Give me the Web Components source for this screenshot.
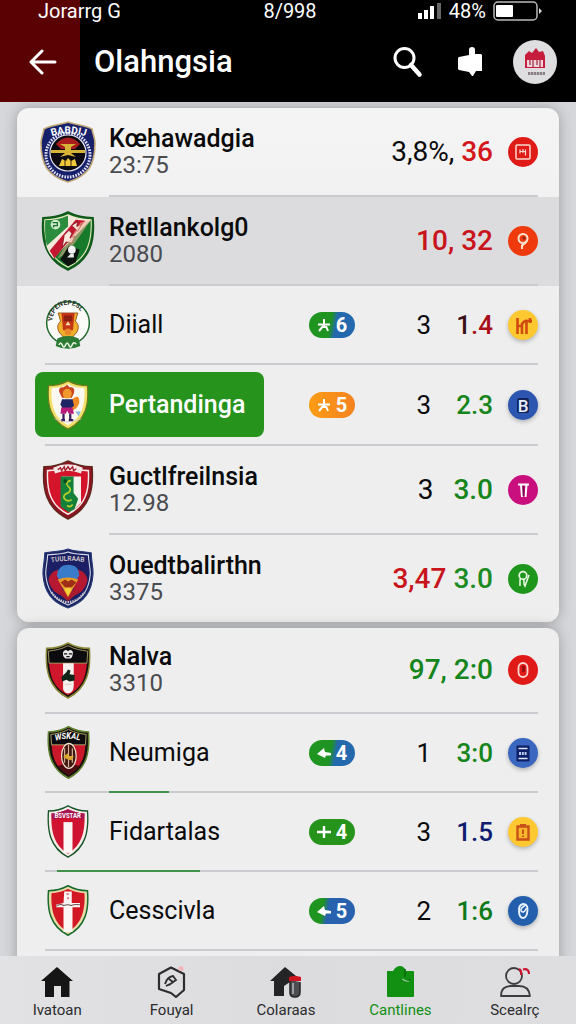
<!DOCTYPE html>
<html lang="id">
<head>
<meta charset="utf-8">
<meta name="viewport" content="width=device-width, initial-scale=1">
<title>Olahngsia</title>
<style>
  body {
    margin: 0;
    font-family: Roboto, "Liberation Sans", sans-serif;
    color: #0b0b0c;
  }
</style>
</head>
<body>
<score-app>
  <status-bar slot="header" carrier="Jorarrg G" time="8/998" charge="48%"></status-bar>
  <title-bar slot="header">Olahngsia</title-bar>

  <score-card>
    <team-row tall rule="short" crest="police" name="Kœhawadgia" sub="23:75">
      <span slot="value"><span style="font-weight:400">3,8%,</span> <span style="color:#d3171b">36</span></span>
      <round-badge slot="badge" icon="frame" color="#e01a17"></round-badge>
    </team-row>
    <team-row tall shaded rule="short" crest="sash" name="Retllankolg0" sub="2080">
      <span slot="value" style="color:#c8151b">10, 32</span>
      <round-badge slot="badge" icon="pin" color="#ee3a0c"></round-badge>
    </team-row>
    <team-row crest="round" name="Diiall">
      <count-pill slot="pill" kind="split" mark="star">6</count-pill>
      <span slot="count">3</span>
      <span slot="value"><span style="color:#3a1114">1</span><span style="color:#a80f18">.4</span></span>
      <round-badge slot="badge" icon="bars" color="#fdc830" raised></round-badge>
    </team-row>
    <team-row active crest="player" name="Pertandinga">
      <count-pill slot="pill" kind="orange" mark="star">5</count-pill>
      <span slot="count">3</span>
      <span slot="value" style="color:#15851c">2.3</span>
      <round-badge slot="badge" icon="b" color="#2c56b0" raised></round-badge>
    </team-row>
    <team-row tall rule="short" crest="snake" name="Guctlfreilnsia" sub="12.98">
      <span slot="count">3</span>
      <span slot="value" style="color:#15851c">3.0</span>
      <round-badge slot="badge" icon="t" color="#c90f7d"></round-badge>
    </team-row>
    <team-row tall rule="none" crest="balloon" name="Ouedtbalirthn" sub="3375">
      <span slot="value"><span style="color:#c8151b">3,47</span> <span style="color:#1d8b24">3.0</span></span>
      <round-badge slot="badge" icon="key" color="#1e961b"></round-badge>
    </team-row>
  </score-card>

  <score-card class="lower">
    <team-row tall crest="tower" name="Nalva" sub="3310">
      <span slot="value" style="color:#15851c">97, 2:0</span>
      <round-badge slot="badge" icon="ring" color="#e01a17"></round-badge>
    </team-row>
    <team-row crest="oval" name="Neumiga" mark-from="64" mark-size="60">
      <count-pill slot="pill" kind="split" mark="arrow">4</count-pill>
      <span slot="count">1</span>
      <span slot="value" style="color:#15851c">3:0</span>
      <round-badge slot="badge" icon="page" color="#3a67bf" raised></round-badge>
    </team-row>
    <team-row crest="stripe" name="Fidartalas" mark-from="12" mark-size="143">
      <count-pill slot="pill" kind="green" mark="plus">4</count-pill>
      <span slot="count">3</span>
      <span slot="value" style="color:#101c70">1.5</span>
      <round-badge slot="badge" icon="clip" color="#fdc830" raised></round-badge>
    </team-row>
    <team-row crest="cross" name="Cesscivla">
      <count-pill slot="pill" kind="blue" mark="arrow">5</count-pill>
      <span slot="count">2</span>
      <span slot="value" style="color:#0f7a17">1:6</span>
      <round-badge slot="badge" icon="loop" color="#245fae" raised></round-badge>
    </team-row>
  </score-card>

  <tab-item slot="tabs" icon="home">Ivatoan</tab-item>
  <tab-item slot="tabs" icon="hex">Fouyal</tab-item>
  <tab-item slot="tabs" icon="house">Colaraas</tab-item>
  <tab-item slot="tabs" icon="bag" current>Cantlines</tab-item>
  <tab-item slot="tabs" icon="person">Scealrç</tab-item>
</score-app>

<script>
const SHIELD = 'M28 1 C36 5 45 7 54 7 C56 30 52 50 28 61 C4 50 0 30 2 7 C11 7 20 5 28 1Z';

// every crest is drawn on a 56x62 canvas; w and h are the size on the page
const CRESTS = {
  police: { w: 56, h: 62, art: `
    <path d="M28 1 C36 4 45 4 52 8 C53 14 55 17 55 22 C55 44 48 55 28 61 C8 55 1 44 1 22 C1 17 3 14 4 8 C11 4 20 4 28 1Z" fill="#17206b" stroke="#c2a878" stroke-width="1.6"/>
    <circle cx="28" cy="34" r="22" fill="none" stroke="#dfe0f5" stroke-width="3" stroke-dasharray="1.6 1.2"/>
    <circle cx="28" cy="32" r="18" fill="#0c0b12" stroke="#e7e3ef" stroke-width="1.2"/>
    <path d="M16 23 Q28 10 40 23 L35 28 H21Z" fill="#a81d1d"/>
    <path d="M11 29 H25 V26 L20 23 H36 L31 26 V29 H45 V32 H31 L36 36 L28 34 L20 36 L25 32 H11Z" fill="#d8b436"/>
    <path d="M19 45 L22 38 L26 40 L28 37 L31 40 L35 38 L37 45Z" fill="#f0c83a"/>
    <path d="M25 39 V45 M31 39 V45" stroke="#402a08" stroke-width="1"/>
    <path id="arc1" d="M7 17 Q28 8 50 17" fill="none"/>
    <text font-size="10" font-weight="700" fill="#fff"><textPath href="#arc1" startOffset="5">BABDIJ</textPath></text>` },
  sash: { w: 54, h: 60, art: `
    <path d="${SHIELD}" fill="#12631f" stroke="#12591c" stroke-width="1.6"/>
    <path d="M28 4 C36 8 44 9 52 9 C53 30 49 48 28 58 C7 48 3 30 4 9 C12 9 20 8 28 4Z" fill="#167a2a" stroke="#dfe7b8" stroke-width="1.2"/>
    <path d="M28 4 L38 8 L52 9 L13 49 C7 42 5 36 5 32Z" fill="#f2e8dc"/>
    <path d="M36 9 L46 10 L14 49 L9 41Z" fill="#c3182f"/>
    <path d="M5 10 C15 10 22 8 28 5 L28 16 L6 36 C4 26 4 18 5 10Z" fill="#2b8c3d"/>
    <path d="M24 25 l5 -5 3 3 -2 5 5 -2 -3 7 -6 -1 -4 6z M32 15 l6 -4 -1 5 5 -2 -4 7z" fill="#fbe9df" stroke="#7c0f1c" stroke-width=".8"/>
    <path d="M52 9 L41 12 L17 49 L28 43 L38 29Z" fill="#f0b295" opacity=".55"/>
    <path d="M20 50 L29 36 L40 40 L36 53 L28 57Z" fill="#0d1410"/>
    <circle cx="32" cy="40" r="4" fill="#f2f2f2"/><path d="M31 44 l-4 4 7 0 0 -4z" fill="#e9ede9"/>
    <circle cx="15" cy="14" r="5" fill="#cfeacf"/><path d="M12 12 h5 v3 h-4 v2" fill="none" stroke="#17702a" stroke-width="1.3"/>` },
  round: { w: 46, h: 51, art: `
    <circle cx="28" cy="29" r="26" fill="#fbfbf7" stroke="#1d6a2b" stroke-width="1.8"/>
    <path id="arc3" d="M9 27 A19 20 0 0 1 47 27" fill="none"/>
    <text font-size="8" font-weight="700" fill="#2a2f2a"><textPath href="#arc3">VEPENEPESL</textPath></text>
    <path d="M16 17 H40 L37 27 Q43 32 39 40 L34 46 H22 L17 40 Q13 32 19 27Z" fill="#f0b02c" stroke="#8c4b12" stroke-width="1"/>
    <path d="M20 17 H36 L34 38 H22Z" fill="#c23616"/><path d="M23 20 H33 V27 H23Z" fill="#8e1f10"/>
    <path d="M28 27 l3 5 h-6z" fill="#f8dfae"/><circle cx="28" cy="40" r="4" fill="#e8862a"/>
    <path d="M13 57 L15 48 Q28 42 41 48 L43 57 Q28 64 13 57Z" fill="#2b7a33"/>
    <path d="M17 56 q2 -5 4 0 t4 0 t4 0 t4 0 t5 -1" fill="none" stroke="#e8f3df" stroke-width="2"/>` },
  player: { w: 42, h: 50, art: `
    <path d="${SHIELD}" fill="#f1e069" stroke="#6b7a1c" stroke-width="1.6"/>
    <path d="M28 5 C35 9 43 10 50 10 C51 30 47 47 28 56 C9 47 5 30 6 10 C13 10 21 9 28 5Z" fill="#fbf8f2"/>
    <path d="M16 14 Q16 8 22 9 L27 6 L30 9 Q38 8 36 16 L33 22 H20Z" fill="#c8451d"/>
    <circle cx="27" cy="17" r="6" fill="#f0982d"/>
    <path d="M33 24 Q44 16 43 28 Q41 36 33 38Z" fill="#f08a26"/>
    <path d="M20 24 H34 L36 32 L31 36 H21 L18 30Z" fill="#1f2564"/>
    <path d="M19 34 H34 L36 42 H29 L27 38 L25 42 H18Z" fill="#b81b78"/>
    <path d="M22 42 V50 M31 42 V50 M19 50 H24 M29 50 H35" stroke="#3a1b60" stroke-width="3"/>
    <path d="M38 39 l7 0 -3 6z" fill="#86b6d8"/><path d="M10 48 Q28 56 46 48" fill="none" stroke="#c9c9c9"/>` },
  snake: { w: 52, h: 60, art: `
    <path d="${SHIELD}" fill="#8b1420" stroke="#5c2a1f" stroke-width="1.4"/>
    <path d="M28 6 C36 10 43 11 50 11 C51 32 47 47 28 56 C9 47 5 32 6 11 C13 11 20 10 28 6Z" fill="#d3142b" stroke="#f4e9e6" stroke-width="1.6"/>
    <path d="M12 8 Q28 1 44 8 L42 14 Q28 8 14 14Z" fill="#f3e6e4"/>
    <path d="M17 10 l3 -2 1 3 3 -4 1 4 3 -4 2 3 3 -3 1 4 3 -2" fill="none" stroke="#a41826" stroke-width="1.4"/>
    <path d="M21 17 H42 V44 L32 54 L21 48Z" fill="#f5f1ee"/>
    <path d="M20 17 H34 V34 L39 40 L35 51 L29 54 L20 48Z" fill="#15803a"/>
    <path d="M31 21 q-7 2 -3 6 q5 4 0 7 q-6 2 -4 6 q4 4 8 1 M27 47 q3 3 6 -1" fill="none" stroke="#b8cf2c" stroke-width="1.800"/>
    <circle cx="25" cy="22" r="2" fill="#0b4b20"/>` },
  balloon: { w: 52, h: 61, art: `
    <path d="M28 1 C36 4 45 3 53 5 C53 12 55 18 55 26 C54 44 46 55 28 61 C10 55 2 44 1 26 C1 18 3 12 3 5 C11 3 20 4 28 1Z" fill="#1a2460" stroke="#2b3b7b" stroke-width="1.2"/>
    <path d="M28 4 C36 7 44 6 50 7 C50 14 52 19 52 26 C51 42 44 52 28 58 C12 52 5 42 4 26 C4 19 6 14 6 7 C12 6 20 7 28 4Z" fill="#1c1f63" stroke="#d5d8ea" stroke-width="1.2"/>
    <path d="M7 33 Q8 24 17 22 L24 49 Q10 46 7 33Z M49 33 Q48 24 39 22 L32 49 Q46 46 49 33Z" fill="#b61831"/>
    <path d="M14 43 H42 L28 54Z" fill="#a81c2e"/>
    <path d="M16 28 Q17 17 28 17 Q40 17 40 28 L28 49Z" fill="#3a7cc9"/>
    <path d="M17 32 Q28 28 39 32 L28 50Z" fill="#e89a28"/>
    <path d="M20 35 l5 -3 3 2 4 -2 5 3 -5 5 h-7z" fill="#9c2f16"/><path d="M24 41 h8 l-4 8z" fill="#f5d23b"/>
    <path id="arc6" d="M9 15 Q28 11 49 15" fill="none"/>
    <text font-size="7" font-weight="700" fill="#c9c2c6"><textPath href="#arc6" startOffset="1">TUULRAAB</textPath></text>
    <path d="M10 45 Q18 55 28 55 Q38 55 46 45" fill="none" stroke="#c8c4c9" stroke-width="2.4" stroke-dasharray="1.6 1"/>` },
  tower: { w: 46, h: 57, art: `
    <path d="${SHIELD}" fill="#14110f" stroke="#8c8a3a" stroke-width="1.8"/>
    <path d="M5 22 H51 C50 40 44 50 28 58 C12 50 6 40 5 22Z" fill="#d0162a"/>
    <path d="M28 4 C36 8 44 9 52 10 L51 23 H5 L4 10 C12 9 20 8 28 4Z" fill="#0c0c0e" stroke="#d2c47c" stroke-width=".8"/>
    <path d="M22 23 H35 V47 Q35 55 28 56 Q21 55 22 47Z" fill="#f6f1ee"/>
    <path d="M22 11 q3 -4 6 -1 q4 -3 6 1 q0 6 -3 7 h-6 q-4 -2 -3 -7z" fill="#e8e8e8"/><path d="M23 13 h4 m2 0 h4 m-7 3 h4" stroke="#111" stroke-width="1.4"/>
    <path d="M20 38 l6 -5 2 -3 3 1 -1 4 6 1 0 6 -6 1 -4 -2 -5 2z" fill="#10251a"/>
    <path d="M24 46 h8" stroke="#e5bcb8" stroke-width="1"/>` },
  oval: { w: 43, h: 53, art: `
    <path d="${SHIELD}" fill="#15120f" stroke="#5f7f2f" stroke-width="2"/>
    <path d="M6 22 H50 C49 40 43 49 28 57 C13 49 7 40 6 22Z" fill="#c8182a"/>
    <path d="M13 47 Q28 42 43 47 L28 58Z" fill="#4c0d12"/>
    <path d="M28 4 C36 8 44 9 51 10 L50 22 H6 L5 10 C12 9 20 8 28 4Z" fill="#0c0c0e" stroke="#d8cc80" stroke-width=".9"/>
    <path id="arc8" d="M9 18 Q28 12 48 18" fill="none"/>
    <text font-size="10" font-weight="700" font-style="italic" fill="#fff"><textPath href="#arc8" startOffset="2">WSKAL</textPath></text>
    <ellipse cx="28.5" cy="35" rx="9.5" ry="14.5" fill="#3f1710" stroke="#eddccb" stroke-width="1.6"/>
    <path d="M28 22 V48 M23 26 V43 M33 26 V43" stroke="#d8b59a" stroke-width="1.5"/>
    <path d="M21 36 l6 -4 2 3 6 0 -3 5 -6 -1z" fill="#dba62e"/>` },
  stripe: { w: 42, h: 53, art: `
    <path d="${SHIELD}" fill="#f5ebe8" stroke="#175427" stroke-width="1.8"/>
    <path d="M28 5 C36 8 43 10 50 10 C51 30 47 47 28 57 C9 47 5 30 6 10 C13 10 20 8 28 5Z" fill="#cf1330"/>
    <path d="M28 5 C36 8 43 10 50 10 L49 17 Q28 13 7 17 L6 10 C13 10 20 8 28 5Z" fill="#a51552"/>
    <rect x="22" y="20" width="12" height="36" fill="#fbf6f6"/>
    <text x="10" y="15" font-size="8" font-weight="700" fill="#fff">BSVSTAR</text>` },
  cross: { w: 42, h: 51, art: `
    <path d="${SHIELD}" fill="#e7d9a8" stroke="#176a2c" stroke-width="2"/>
    <path d="M28 5 C36 8 43 10 50 10 C51 30 47 47 28 57 C9 47 5 30 6 10 C13 10 20 8 28 5Z" fill="#d21823"/>
    <path d="M23 8 H33 V22 H44 V27 H34 V57 H22 V27 H12 V24 L22 22Z" fill="#fbf6f4"/>
    <path d="M12 26 q6 -4 10 -1 q6 -2 10 0 q5 -2 12 -1" fill="none" stroke="#6a5450" stroke-width="1.4"/>
    <path d="M26 11 h3 m-2 5 h2" stroke="#c21a26" stroke-width="1.4"/>` },
};

const BADGE_ICONS = {
  frame: `<rect x="8" y="8" width="14" height="14" rx="1" fill="none" stroke="#fbd9d0" stroke-width="1.5"/>
    <path d="M12 12.5 v4 M12 14.5 h6 M15 12 v4 M17.5 12.5 v6" stroke="#fbd9d0" stroke-width="1.2"/>`,
  pin: `<circle cx="15" cy="12.5" r="4.5" fill="none" stroke="#fde3cf" stroke-width="2"/><circle cx="16" cy="12" r="1.5" fill="#8c2410"/>
    <path d="M18.5 15 Q17 18 14 19.5 V23" fill="none" stroke="#fde3cf" stroke-width="2"/>`,
  bars: `<path d="M9.5 8 V24 M14 13 V24 M18.5 10 V24 M9.5 16 H14 M14 14 Q17 10 19 11 M19 11 H24 M22 8 V13" fill="none" stroke="#d14a10" stroke-width="2.6"/>`,
  b: `<rect x="9" y="8" width="12" height="15" rx="2" fill="#12235c"/><text x="15" y="21.5" text-anchor="middle" font-size="17" font-weight="500" fill="#e9effb">B</text>`,
  t: `<path d="M10 9.5 H21 M13 10 L14 22 M18.5 10 L17.5 22" fill="none" stroke="#fff" stroke-width="2"/><path d="M15.5 11 V21" stroke="#6e0c50" stroke-width="1.6"/>`,
  key: `<circle cx="15" cy="11.5" r="3.8" fill="none" stroke="#e5f7dd" stroke-width="1.8"/>
    <path d="M12 15 V22 M16 15 V20 L17 22 L21 11" fill="none" stroke="#e5f7dd" stroke-width="1.6"/>`,
  ring: `<rect x="10.5" y="8" width="9" height="14" rx="4.5" fill="none" stroke="#ffd9d2" stroke-width="1.8"/><path d="M15.5 11 V17" stroke="#8a0f0f" stroke-width="2.5"/>`,
  page: `<rect x="8.5" y="7.5" width="13" height="16" rx="1" fill="#0d1f66"/><path d="M10.5 10.5 H19.5 M10.5 20.5 H19.5" stroke="#dbe6fb" stroke-width="1.5"/>
    <path d="M11 15.5 H19" stroke="#b6c8f0" stroke-width="3" stroke-dasharray="2 .8"/>`,
  clip: `<path d="M9.5 9.5 H20.5 V22.5 H9.5Z" fill="#f8b62a" stroke="#c8501a" stroke-width="2.4"/><path d="M12 7 H18 V10 H12Z" fill="#c8501a"/>
    <path d="M15 12.5 V17 M15 18.5 V20" stroke="#c8501a" stroke-width="2"/>`,
  loop: `<path d="M15 8 Q20 8 19.5 14 Q19 21.5 15.5 22 Q11 22 11 15 Q10.5 9 15 8Z" fill="none" stroke="#e9f3fd" stroke-width="1.9"/>
    <path d="M18 9 Q12 12 13 15 Q16 18 18.5 12" fill="none" stroke="#e9f3fd" stroke-width="1.5"/>`,
};

const PILL_MARKS = {
  star: `<path d="M1 6.5 H13 M7 1 V8 M7 7 L2 13 M5 9 H10 M9 8 L11 13" fill="none" stroke="currentColor" stroke-width="2"/>`,
  plus: `<path d="M7 1 V13 M0 7 H14" stroke="currentColor" stroke-width="2.4"/>`,
  arrow: `<path d="M0 8 L7 2 L8 6 L14 7 V9.5 L9 9.5 L8 12Z" fill="currentColor"/>`,
};

const TAB_ICONS = {
  home: `<path d="M16 1 L32 15 H28.5 V31 H20 V20 H13 V31 H4 V15 H0Z" fill="#151515"/>`,
  hex: `<path d="M15 1.5 L28 8 V24 L20 31 L15 27 L3 23 V8Z" fill="none" stroke="#2d2d2f" stroke-width="2.2" stroke-linejoin="round"/>
    <path d="M9 18 Q11 11 17 10 L20 14 L13 19 M13 13 L17 16 M10 20 L14 18" fill="none" stroke="#2d2d2f" stroke-width="1.8"/>
    <circle cx="25" cy="2.5" r="2.5" fill="#f3b6bb"/>`,
  house: `<path d="M15 1 L31 14 H26 V16 H20 L14 20 V30 H4 V15 H0Z" fill="#242426"/>
    <path d="M20 14 V27 Q20 31 25 31 Q30 31 30 26 V16" fill="#4c4d50" stroke="#242426" stroke-width="1.5"/>
    <path d="M19 11 Q25 9 31 11 V15 H19Z" fill="#cf1520"/><path d="M23 17 V28" stroke="#b7b8bb" stroke-width="1.5"/>`,
  bag: `<path d="M3 5 H9 Q12 0 16 0 Q20 0 22 5 H29 Q30 5 30 6 V30 Q30 31 29 31 H4 Q3 31 3 30Z" fill="#119012"/>
    <path d="M21 3 V11 M17 13 Q22 17 26 13" fill="none" stroke="#0a6a0c" stroke-width="1.5"/><path d="M18 13 q4 3 7 2" fill="none" stroke="#9bd59b" stroke-width="1.2"/>`,
  person: `<circle cx="15" cy="10" r="8" fill="none" stroke="#3d3d40" stroke-width="1.8"/>
    <path d="M2 30 Q2 20 12 20 H20 Q30 20 31 30Z" fill="none" stroke="#3d3d40" stroke-width="1.8" stroke-linejoin="round"/>
    <path d="M20 3 Q23 5 22 9 M24 3.500 Q30 2 30 8" fill="none" stroke="#c9152f" stroke-width="2.2"/>`,
};

class ScoreApp extends HTMLElement {
  constructor() {
    super();
    this.attachShadow({mode: 'open'});
    this.shadowRoot.innerHTML = `
      <style>
        :host {
          display: flex;
          flex-direction: column;
          height: 100vh;
          background: #d6d7da;
        }
        header {
          flex: none;
          color: #fff;
          background: linear-gradient(90deg, #5a0104 80px, #000 80px);
        }
        main {
          flex: 1;
          min-height: 0;
          overflow-y: auto;
          scrollbar-width: none;
          display: flex;
          flex-direction: column;
          gap: 6px;
          padding: 6px 17px 0;
        }
        nav {
          flex: none;
          display: flex;
          padding: 10px 4px 4px 0;
          background: linear-gradient(90deg, #e2e2e4, #dcdcdf 50%, #dedee1);
        }
        ::slotted(tab-item) {
          flex: 1;
        }
      </style>
      <header><slot name="header"></slot></header>
      <main><slot></slot></main>
      <nav><slot name="tabs"></slot></nav>
    `;
  }
}

class StatusBar extends HTMLElement {
  constructor() {
    super();
    this.attachShadow({mode: 'open'});
  }

  connectedCallback() {
    this.shadowRoot.innerHTML = `
      <style>
        :host {
          display: grid;
          grid-template-columns: 1fr auto 1fr;
          align-items: center;
          height: 22px;
          padding: 0 34px 0 38px;
          font-size: 20px;
          line-height: 22px;
        }
        .right {
          display: flex;
          justify-content: flex-end;
          align-items: center;
          gap: 7px;
        }
        svg { display: block; }
      </style>
      <span>${this.getAttribute('carrier')}</span>
      <span>${this.getAttribute('time')}</span>
      <span class="right">
        <svg width="25" height="18" viewBox="0 0 25 18" aria-hidden="true">
          <path d="M1 11 h4 v6 h-4z M7 8 h4 v9 h-4z M13 4 h4 v13 h-4z" fill="#fff"/>
          <path d="M20 1 h4 v16 h-4z" fill="#666"/>
        </svg>
        <span>${this.getAttribute('charge')}</span>
        <svg width="49" height="20" viewBox="0 0 49 20" aria-hidden="true">
          <rect x="1" y="1" width="43" height="18" rx="4" fill="none" stroke="#bbb" stroke-width="1.5"/>
          <rect x="3" y="4" width="17" height="12" rx="1" fill="#fff"/>
          <path d="M46 7 L49 10 L46 13Z" fill="#ddd"/>
        </svg>
      </span>
    `;
  }
}

class TitleBar extends HTMLElement {
  constructor() {
    super();
    this.attachShadow({mode: 'open'});
    this.shadowRoot.innerHTML = `
      <style>
        :host {
          display: flex;
          align-items: center;
          height: 80px;
          padding-right: 19px;
        }
        h1 {
          flex: 1;
          margin: 0 0 0 14px;
          font-size: 31px;
          line-height: 40px;
          font-weight: 500;
        }
        button {
          display: flex;
          align-items: center;
          justify-content: center;
          padding: 0;
          border: none;
          background: transparent;
          color: inherit;
          cursor: pointer;
        }
        .back { width: 80px; height: 80px; padding-left: 6px; }
        .tool { width: 62px; height: 48px; }
        .me { width: 44px; height: 44px; margin-left: 12px; border-radius: 50%; background: #dedee0; }
      </style>
      <button class="back" aria-label="Back">
        <svg width="28" height="26" viewBox="0 0 28 26" fill="none" stroke="#fff" stroke-width="3" stroke-linecap="round" stroke-linejoin="round">
          <path d="M13 2 L2 13 L13 24 M2 13 H26"/>
        </svg>
      </button>
      <h1><slot></slot></h1>
      <button class="tool" aria-label="Search">
        <svg width="30" height="32" viewBox="0 0 30 32" fill="none" stroke="#fff">
          <circle cx="11.5" cy="12" r="9.5" stroke-width="3"/>
          <path d="M18 19 L26.5 28.5" stroke-width="4.5" stroke-linecap="round"/>
        </svg>
      </button>
      <button class="tool" aria-label="Like">
        <svg width="26" height="32" viewBox="0 0 26 32" fill="#fff">
          <path d="M12 4 Q12 1 15 1 Q18 1 18 4 V8 H24 L25 9 V25 H19 L16 30 L15 30 L12 26 L2 24 L1 23 V12 L2 11 L12 9Z"/>
        </svg>
      </button>
      <button class="me" aria-label="Profile">
        <svg width="24" height="28" viewBox="0 0 24 28">
          <path d="M2 7 L6 3 L9 5 L13 0 L16 4 L20 3 L22 8 V20 H2Z" fill="#c51d3b"/>
          <path d="M4 12 H20 V19 H4Z" fill="#f0d6da"/>
          <path d="M7 12 V17 M10 12 V19 M14 12 V17 M17 12 V19" stroke="#9c2440" stroke-width="1.2"/>
          <path d="M5 25.5 H22" stroke="#8a7f82" stroke-width="3" stroke-dasharray="2.4 .6"/>
        </svg>
      </button>
    `;
  }
}

class ScoreCard extends HTMLElement {
  constructor() {
    super();
    this.attachShadow({mode: 'open'});
    this.shadowRoot.innerHTML = `
      <style>
        :host {
          display: block;
          flex: none;
          overflow: hidden;
          border-radius: 12px;
          background: linear-gradient(#f4f4f4, #eeeeef 40%);
          box-shadow: 0 0 14px rgba(0, 0, 0, .28);
        }
        :host(.lower) {
          --tall: 84px;
          padding-bottom: 40px;
          background: #eeeeef;
        }
      </style>
      <slot></slot>
    `;
  }
}

class TeamRow extends HTMLElement {
  constructor() {
    super();
    this.attachShadow({mode: 'open'});
  }

  connectedCallback() {
    const name = this.getAttribute('name');
    const sub = this.getAttribute('sub');
    const from = this.getAttribute('mark-from') || 0;
    const size = this.getAttribute('mark-size') || 0;

    this.shadowRoot.innerHTML = `
      <style>
        :host {
          display: block;
        }
        :host([shaded]) {
          background: #dcdcdf;
        }
        .row {
          display: flex;
          align-items: center;
          min-height: 77px;
          padding: 0 21px 0 18px;
          font-size: 26px;
          line-height: 30px;
        }
        :host([tall]) .row {
          min-height: var(--tall, 87px);
          font-size: 28px;
        }
        :host([active]) .row {
          min-height: 79px;
        }
        .main {
          flex: 1;
        }
        .team {
          display: flex;
          align-items: center;
          gap: 13px;
          padding-left: 5px;
        }
        :host([active]) .team {
          box-sizing: border-box;
          width: 229px;
          height: 65px;
          border-radius: 8px;
          background: #26931c;
          color: #fff;
        }
        .name {
          font-size: 25px;
          line-height: 26px;
          white-space: nowrap;
        }
        :host([tall]) .name, :host([active]) .name {
          font-weight: 500;
        }
        .sub {
          font-size: 24px;
          line-height: 26px;
          color: #4a4b4f;
        }
        .count {
          width: 76px;
          text-align: right;
        }
        .value {
          min-width: 62px;
          text-align: right;
          font-weight: 500;
        }
        :host([tall]) .count {
          width: auto;
          margin-right: 20px;
        }
        :host([tall]) .value {
          min-width: 0;
        }
        .badge {
          margin-left: 15px;
        }
        .rule {
          height: 2px;
          margin: 0 21px 0 28px;
          background:
            linear-gradient(#43924a, #43924a) ${from}px 0 / ${size}px 2px no-repeat,
            #cacbcf;
        }
        :host([rule=short]) .rule {
          margin-left: 92px;
        }
        :host([rule=none]) .rule {
          display: none;
        }
      </style>
      <div class="row">
        <div class="main">
          <div class="team">
            <team-crest name="${this.getAttribute('crest')}"></team-crest>
            <div>
              <div class="name">${name}</div>
              ${sub ? `<div class="sub">${sub}</div>` : ''}
            </div>
          </div>
        </div>
        <slot name="pill"></slot>
        <div class="count"><slot name="count"></slot></div>
        <div class="value"><slot name="value"></slot></div>
        <div class="badge"><slot name="badge"></slot></div>
      </div>
      <div class="rule"></div>
    `;
  }
}

class TeamCrest extends HTMLElement {
  constructor() {
    super();
    this.attachShadow({mode: 'open'});
  }

  connectedCallback() {
    const crest = CRESTS[this.getAttribute('name')];
    this.shadowRoot.innerHTML = `
      <style>
        :host {
          display: flex;
          flex: none;
          justify-content: center;
          width: 56px;
        }
      </style>
      <svg width="${crest.w}" height="${crest.h}" viewBox="0 0 56 62" preserveAspectRatio="none" aria-hidden="true">${crest.art}</svg>
    `;
  }
}

class CountPill extends HTMLElement {
  constructor() {
    super();
    this.attachShadow({mode: 'open'});
  }

  connectedCallback() {
    this.shadowRoot.innerHTML = `
      <style>
        :host {
          display: flex;
          flex: none;
          align-items: center;
          justify-content: center;
          gap: 5px;
          width: 46px;
          height: 26px;
          border-radius: 13px;
          background: #26931c;
          color: #fff;
          font-size: 20px;
          line-height: 26px;
          font-weight: 700;
        }
        :host([kind=split]) { background: linear-gradient(100deg, #1f9420 46%, #2469ad 58%); }
        :host([kind=blue]) { background: linear-gradient(100deg, #1f9420 30%, #2862ae 42%); }
        :host([kind=orange]) { background: linear-gradient(90deg, #fb9c14, #f58220); }
      </style>
      <svg width="14" height="14" viewBox="0 0 14 14" aria-hidden="true">${PILL_MARKS[this.getAttribute('mark')]}</svg>
      <slot></slot>
    `;
  }
}

class RoundBadge extends HTMLElement {
  constructor() {
    super();
    this.attachShadow({mode: 'open'});
  }

  connectedCallback() {
    this.shadowRoot.innerHTML = `
      <style>
        :host {
          display: block;
          width: 30px;
          height: 30px;
          border-radius: 50%;
          background: ${this.getAttribute('color')};
        }
        :host([raised]) { box-shadow: 0 2px 4px rgba(0, 0, 0, .25); }
        svg { display: block; }
      </style>
      <svg width="30" height="30" viewBox="0 0 30 30" aria-hidden="true">${BADGE_ICONS[this.getAttribute('icon')]}</svg>
    `;
  }
}

class TabItem extends HTMLElement {
  constructor() {
    super();
    this.attachShadow({mode: 'open'});
  }

  connectedCallback() {
    this.shadowRoot.innerHTML = `
      <style>
        :host { display: block; }
        a {
          display: flex;
          flex-direction: column;
          align-items: center;
          gap: 2px;
          color: #2b2b2d;
          font-size: 15px;
          line-height: 20px;
          text-decoration: none;
        }
        :host([current]) a {
          color: #119012;
        }
      </style>
      <a href="#${this.getAttribute('icon')}">
        <svg width="32" height="32" viewBox="0 0 32 32" aria-hidden="true">${TAB_ICONS[this.getAttribute('icon')]}</svg>
        <slot></slot>
      </a>
    `;
  }
}

customElements.define('score-app', ScoreApp);
customElements.define('status-bar', StatusBar);
customElements.define('title-bar', TitleBar);
customElements.define('score-card', ScoreCard);
customElements.define('team-crest', TeamCrest);
customElements.define('team-row', TeamRow);
customElements.define('count-pill', CountPill);
customElements.define('round-badge', RoundBadge);
customElements.define('tab-item', TabItem);
</script>
</body>
</html>
